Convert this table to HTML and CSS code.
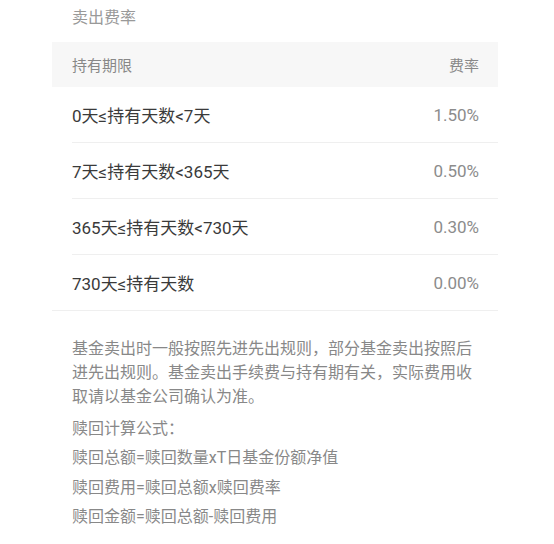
FILE: index.html
```html
<!DOCTYPE html>
<html lang="zh-CN">
<head>
<meta charset="utf-8">
<link rel="stylesheet" href="styles.css">
</head>
<body>
<div class="page">
  <div class="title">卖出费率</div>
  <div class="table">
    <div class="thead">
      <span>持有期限</span>
      <span>费率</span>
    </div>
    <div class="row"><span class="label">0天≤持有天数&lt;7天</span><span class="rate">1.50%</span></div>
    <div class="row"><span class="label">7天≤持有天数&lt;365天</span><span class="rate">0.50%</span></div>
    <div class="row"><span class="label">365天≤持有天数&lt;730天</span><span class="rate">0.30%</span></div>
    <div class="row last"><span class="label">730天≤持有天数</span><span class="rate">0.00%</span></div>
  </div>
  <div class="notes">
    <p>基金卖出时一般按照先进先出规则，部分基金卖出按照后进先出规则。基金卖出手续费与持有期有关，实际费用收取请以基金公司确认为准。</p>
    <p>赎回计算公式<span class="colon">：</span></p>
    <p>赎回总额=赎回数量xT日基金份额净值</p>
    <p>赎回费用=赎回总额x赎回费率</p>
    <p>赎回金额=赎回总额-赎回费用</p>
  </div>
</div>
</body>
</html>
```
FILE: styles.css
```css
html, body {
  margin: 0;
  padding: 0;
  background: #ffffff;
}
body {
  font-family: Roboto, "Noto Sans CJK SC", sans-serif;
}
.page {
  margin-left: 52px;
  width: 446px;
}
.title {
  padding: 6px 20px 0 20px;
  height: 36px;
  line-height: 24px;
  font-size: 16px;
  color: #999999;
}
.thead {
  height: 45px;
  background: #f7f7f7;
  display: flex;
  align-items: center;
  justify-content: space-between;
  padding: 0 19px 0 20px;
  font-size: 15px;
  color: #888888;
}
.row {
  height: 55px;
  margin-left: 20px;
  padding-right: 19px;
  border-bottom: 1px solid #efefef;
  display: flex;
  align-items: center;
  justify-content: space-between;
  font-size: 17px;
}
.row.last {
  margin-left: 0;
  padding-left: 20px;
}
.label {
  color: #3a3a3a;
}
.rate {
  color: #8c8c8c;
}
.notes {
  padding: 26px 20px 0 20px;
  display: flex;
  flex-direction: column;
  gap: 5.5px;
}
.notes p {
  margin: 0;
  font-size: 16px;
  line-height: 24px;
  color: #888888;
}
.colon {
  font-family: "Noto Sans CJK JP", sans-serif;
}
```
